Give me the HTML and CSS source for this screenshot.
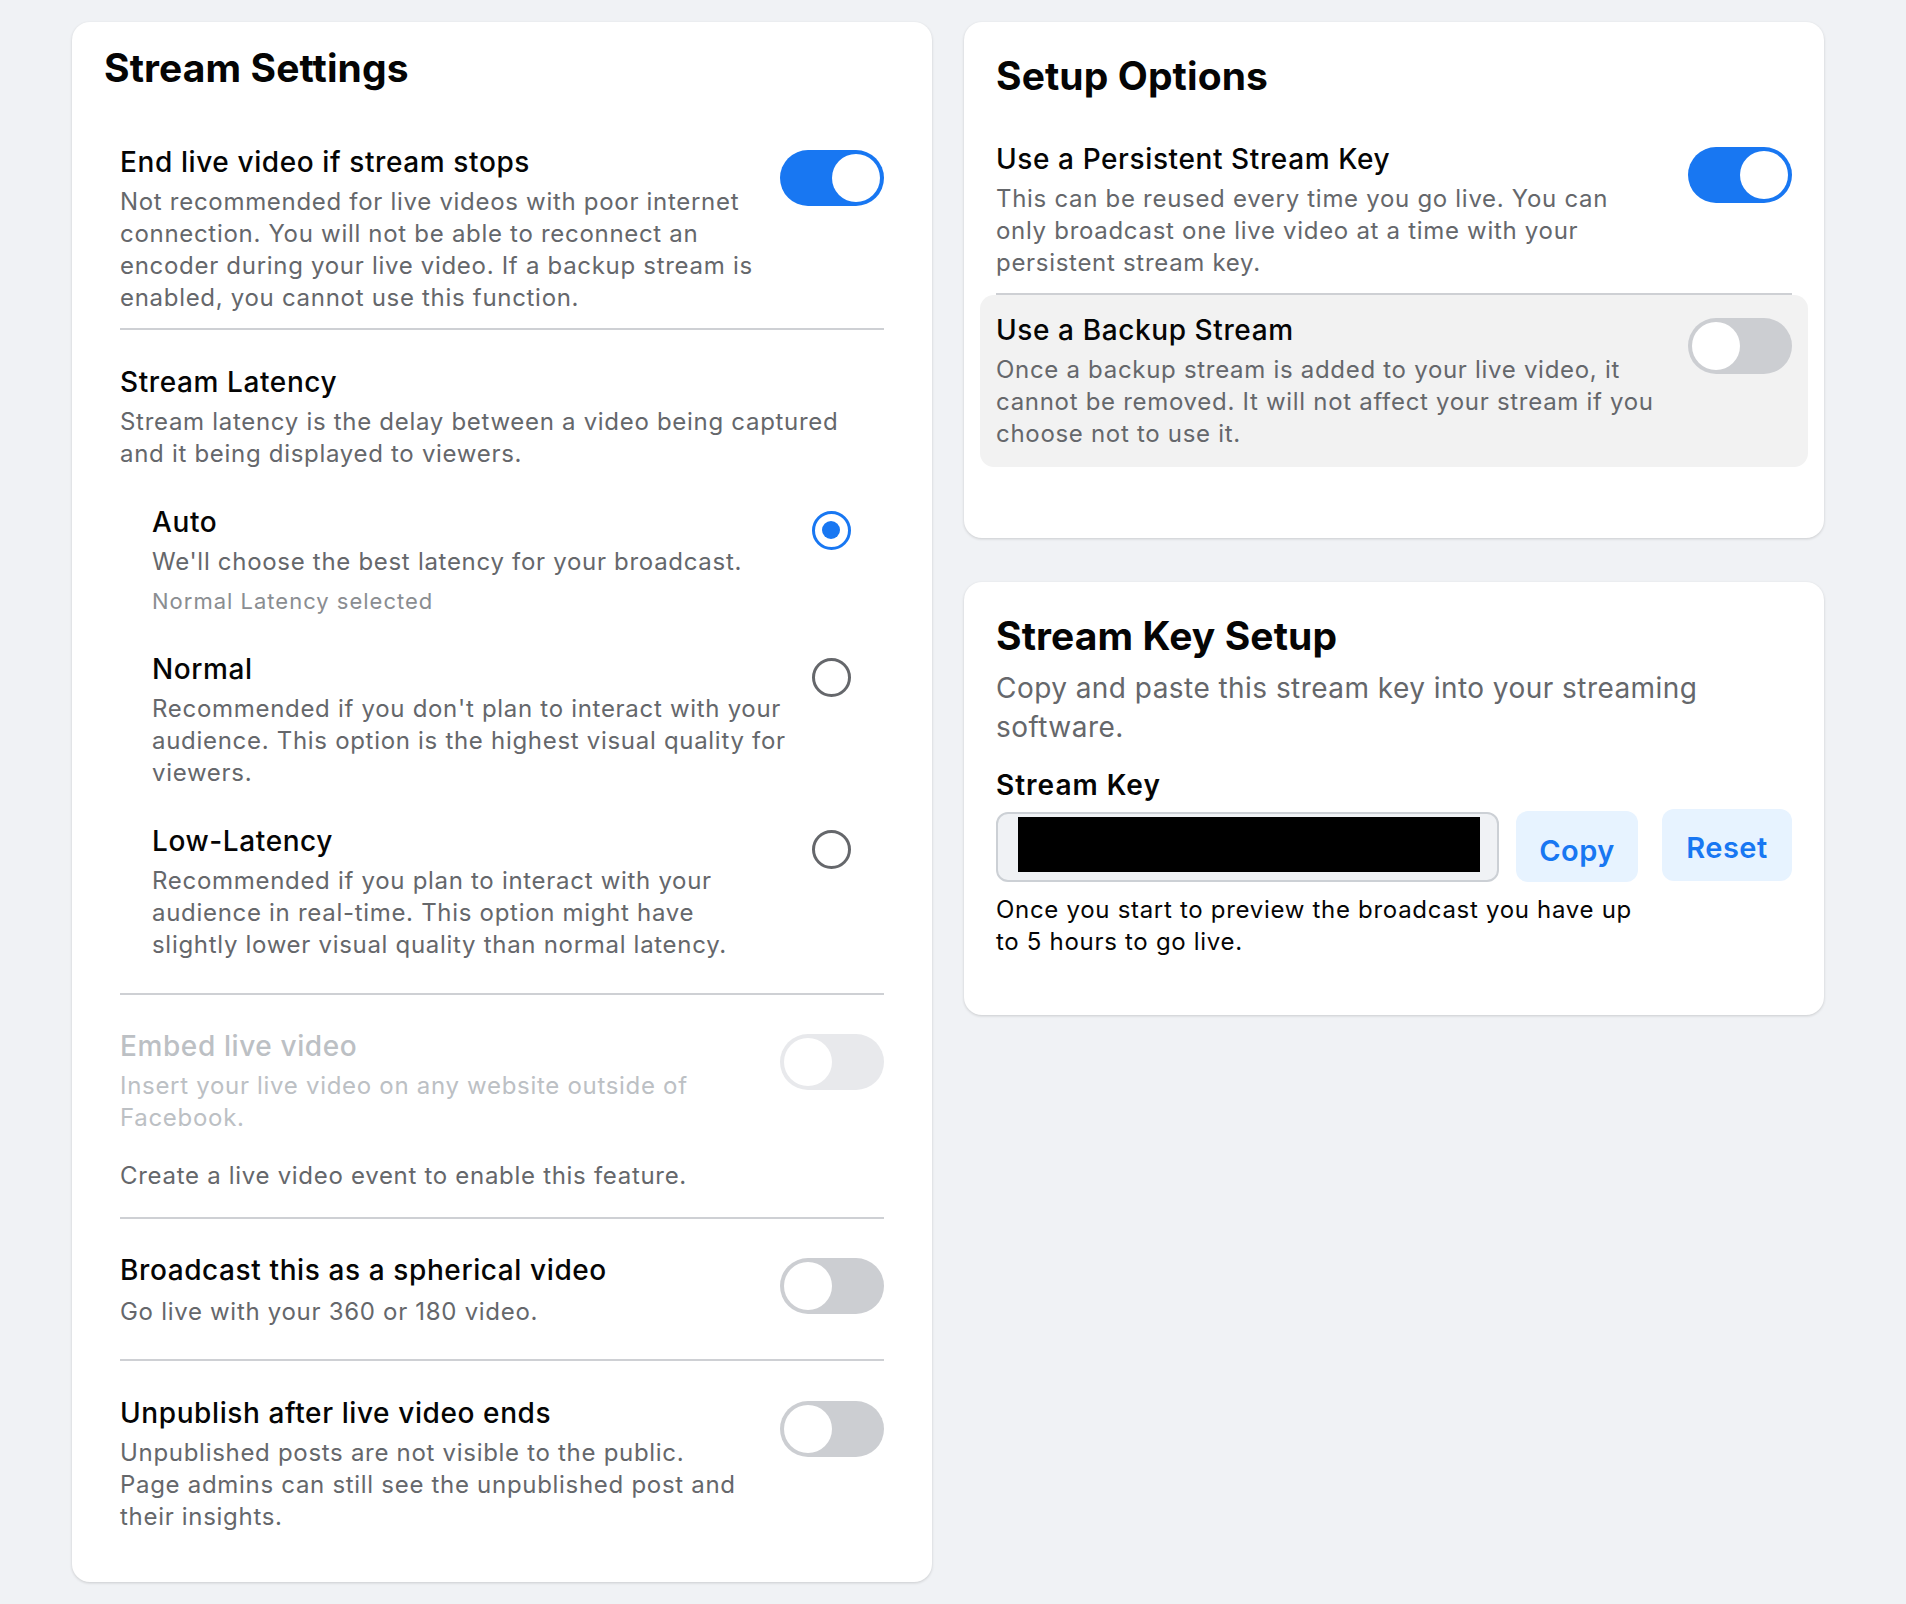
FILE: index.html
```html
<!DOCTYPE html>
<html lang="en">
<head>
<meta charset="utf-8">
<title>Live Producer Settings</title>
<link rel="stylesheet" href="styles.css">
</head>
<body>
<div class="page">
  <section class="card card-settings">
    <h2 class="card-title">Stream Settings</h2>
    <div class="rows">
      <div class="setting setting-end">
        <div class="setting-text">
          <div class="setting-title">End live video if stream stops</div>
          <div class="setting-desc">Not recommended for live videos with poor internet<br>connection. You will not be able to reconnect an<br>encoder during your live video. If a backup stream is<br>enabled, you cannot use this function.</div>
        </div>
        <span class="toggle on"><span class="knob"></span></span>
      </div>

      <div class="setting setting-latency">
        <div class="setting-text">
          <div class="setting-title">Stream Latency</div>
          <div class="setting-desc">Stream latency is the delay between a video being captured<br>and it being displayed to viewers.</div>
          <div class="options">
            <div class="option">
              <div class="option-text">
                <div class="setting-title">Auto</div>
                <div class="option-desc">We'll choose the best latency for your broadcast.</div>
                <div class="option-note">Normal Latency selected</div>
              </div>
              <span class="radio checked"></span>
            </div>
            <div class="option">
              <div class="option-text">
                <div class="setting-title">Normal</div>
                <div class="option-desc">Recommended if you don't plan to interact with your<br>audience. This option is the highest visual quality for<br>viewers.</div>
              </div>
              <span class="radio"></span>
            </div>
            <div class="option">
              <div class="option-text">
                <div class="setting-title">Low-Latency</div>
                <div class="option-desc">Recommended if you plan to interact with your<br>audience in real-time. This option might have<br>slightly lower visual quality than normal latency.</div>
              </div>
              <span class="radio"></span>
            </div>
          </div>
        </div>
      </div>

      <div class="setting setting-embed">
        <div class="setting-text">
          <div class="setting-title disabled">Embed live video</div>
          <div class="setting-desc disabled">Insert your live video on any website outside of<br>Facebook.</div>
          <div class="setting-hint">Create a live video event to enable this feature.</div>
        </div>
        <span class="toggle disabled-toggle"><span class="knob"></span></span>
      </div>

      <div class="setting setting-spherical">
        <div class="setting-text">
          <div class="setting-title">Broadcast this as a spherical video</div>
          <div class="setting-desc">Go live with your 360 or 180 video.</div>
        </div>
        <span class="toggle"><span class="knob"></span></span>
      </div>

      <div class="setting setting-last">
        <div class="setting-text">
          <div class="setting-title">Unpublish after live video ends</div>
          <div class="setting-desc">Unpublished posts are not visible to the public.<br>Page admins can still see the unpublished post and<br>their insights.</div>
        </div>
        <span class="toggle"><span class="knob"></span></span>
      </div>
    </div>
  </section>

  <div class="column">
    <section class="card card-setup">
      <h2 class="card-title">Setup Options</h2>
      <div class="setting setting-persistent">
        <div class="setting-text">
          <div class="setting-title">Use a Persistent Stream Key</div>
          <div class="setting-desc">This can be reused every time you go live. You can<br>only broadcast one live video at a time with your<br>persistent stream key.</div>
        </div>
        <span class="toggle on"><span class="knob"></span></span>
      </div>
      <div class="setting setting-backup">
        <div class="setting-text">
          <div class="setting-title">Use a Backup Stream</div>
          <div class="setting-desc">Once a backup stream is added to your live video, it<br>cannot be removed. It will not affect your stream if you<br>choose not to use it.</div>
        </div>
        <span class="toggle"><span class="knob"></span></span>
      </div>
    </section>

    <section class="card card-key">
      <h2 class="card-title">Stream Key Setup</h2>
      <p class="key-intro">Copy and paste this stream key into your streaming<br>software.</p>
      <div class="key-label">Stream Key</div>
      <div class="key-row">
        <div class="key-input"><span class="key-mask"></span></div>
        <button class="btn btn-copy">Copy</button>
        <button class="btn btn-reset">Reset</button>
      </div>
      <p class="key-note">Once you start to preview the broadcast you have up<br>to 5 hours to go live.</p>
    </section>
  </div>
</div>
</body>
</html>
```
FILE: styles.css
```css
* { box-sizing: border-box; }

body {
  margin: 0;
  background: #f0f2f5;
  font-family: Inter, "Noto Sans", "Liberation Sans", sans-serif;
  color: #050505;
}

.page {
  display: flex;
  align-items: flex-start;
  gap: 32px;
  padding: 22px 72px;
}

.card {
  background: #fff;
  border-radius: 18px;
  box-shadow: 0 1px 3px rgba(0, 0, 0, 0.16);
}

.card-settings {
  width: 860px;
  padding: 22px 32px 49px;
}

.column {
  width: 860px;
  display: flex;
  flex-direction: column;
  gap: 44px;
}

.card-title {
  margin: 0;
  font-size: 39px;
  line-height: 48px;
  font-weight: 700;
  letter-spacing: 0.1px;
  color: #050505;
}

.card-settings .card-title { margin-bottom: 17px; }

.rows { padding: 0 16px; }

.setting {
  display: flex;
  align-items: flex-start;
  justify-content: space-between;
  gap: 24px;
  padding: 33px 0 16px;
  border-bottom: 2px solid #ced0d4;
}

.setting-text { flex: 1; min-width: 0; }

.setting-title {
  font-size: 28px;
  line-height: 36px;
  font-weight: 500;
  letter-spacing: 0.6px;
  color: #050505;
}

.setting-desc,
.option-desc,
.setting-hint,
.key-note {
  font-size: 24px;
  line-height: 32px;
  letter-spacing: 0.7px;
  color: #65676b;
}

.setting-desc { margin-top: 6px; }

.setting-title.disabled,
.setting-desc.disabled { color: #bcc0c4; }

.setting-hint { margin-top: 26px; }

.setting-end { padding-top: 35px; padding-bottom: 14px; }
.setting-latency { padding-top: 34px; padding-bottom: 15px; }
.setting-embed { padding-bottom: 25px; }
.setting-spherical { padding-bottom: 31px; }
.setting-spherical .setting-desc { margin-top: 8px; }
.setting-last { border-bottom: none; padding-top: 34px; padding-bottom: 0; }

.options { margin-top: 17px; }

.option {
  display: flex;
  align-items: flex-start;
  justify-content: space-between;
  padding: 17px 33px 17px 32px;
}

.option-desc { margin-top: 6px; }

.option-note {
  margin-top: 7px;
  font-size: 22px;
  line-height: 32px;
  letter-spacing: 1px;
  color: #8a8d91;
}

/* toggles */
.toggle {
  position: relative;
  flex-shrink: 0;
  width: 104px;
  height: 56px;
  margin-top: 6px;
  border-radius: 28px;
  background: #ccced2;
}

.toggle .knob {
  position: absolute;
  top: 4px;
  left: 4px;
  width: 48px;
  height: 48px;
  border-radius: 50%;
  background: #fff;
}

.toggle.on { background: #1877f2; }
.toggle.on .knob { left: 52px; }
.toggle.disabled-toggle { background: #e8e9ec; }

/* radios */
.radio {
  position: relative;
  flex-shrink: 0;
  width: 39px;
  height: 39px;
  margin-top: 7px;
  border: 3.5px solid #65676b;
  border-radius: 50%;
}

.radio.checked { border-color: #1877f2; }
.radio.checked::after {
  content: "";
  position: absolute;
  top: 7px;
  left: 7px;
  width: 18px;
  height: 18px;
  border-radius: 50%;
  background: #1877f2;
}

/* setup card */
.card-setup { padding: 30px 32px 71px; }
.card-setup .card-title { margin-bottom: 41px; }

.setting-persistent { padding: 0 0 14px; }

.setting-backup {
  margin: 0 -16px;
  padding: 17px 16px 17px;
  border-bottom: none;
  border-radius: 14px;
  background: #f2f2f2;
}

/* key card */
.card-key { padding: 30px 32px 57px; }

.key-intro {
  margin: 9px 0 0;
  font-size: 28px;
  line-height: 39px;
  letter-spacing: 0.45px;
  color: #65676b;
}

.key-label {
  margin-top: 22px;
  font-size: 28px;
  line-height: 32px;
  font-weight: 600;
  letter-spacing: 1px;
}

.key-row {
  display: flex;
  align-items: flex-start;
  margin-top: 8px;
}

.key-input {
  display: flex;
  width: 503px;
  height: 70px;
  margin-top: 3px;
  padding: 3px 17px 8px 20px;
  border: 2px solid #ccd0d5;
  border-radius: 12px;
  background: #f0f2f5;
}

.key-mask {
  flex: 1;
  background: #000;
}

.btn {
  display: flex;
  align-items: center;
  justify-content: center;
  border: none;
  border-radius: 12px;
  background: #e7f3ff;
  color: #1877f2;
  font-family: inherit;
  font-size: 29px;
  font-weight: 600;
  letter-spacing: 0.5px;
  padding: 0;
}

.btn-copy {
  width: 122px;
  height: 71px;
  margin: 2px 0 0 17px;
  padding-top: 8px;
}

.btn-reset {
  width: 130px;
  height: 72px;
  margin-left: 24px;
  padding-top: 4px;
}

.key-note {
  margin: 12px 0 0;
  color: #050505;
}
```
